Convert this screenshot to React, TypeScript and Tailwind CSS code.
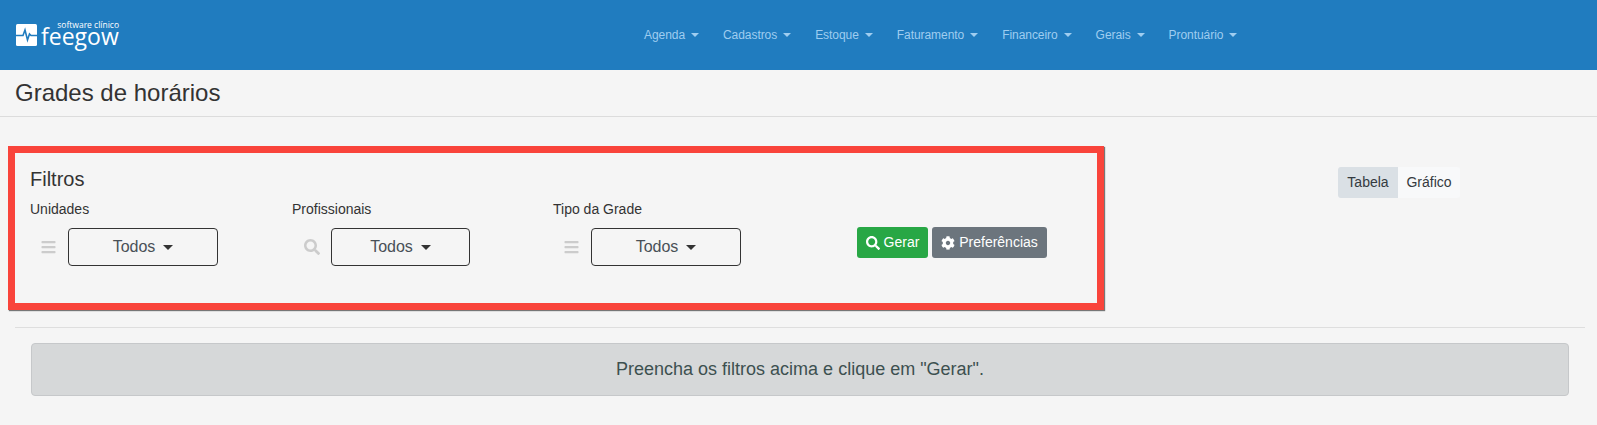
import React from "react";
import { FaBars, FaCog, FaSearch } from "react-icons/fa";

const navItems = ["Agenda", "Cadastros", "Estoque", "Faturamento", "Financeiro", "Gerais", "Prontuário"];

function Caret({ className }: { className: string }) {
    return <span className={`inline-block ${className}`} />;
}

function Logo() {
    return (
        <div className="flex items-start text-white">
            <svg width="21" height="22" viewBox="0 0 21 22" className="mt-[2px]">
                <rect width="21" height="22" rx="1.5" fill="#fff" />
                <path d="M0 11.5 H7 L9 6 L11.5 16 L13.5 10 L15 11.5 H21" fill="none" stroke="#207cbf" strokeWidth="1.6" />
            </svg>
            <div className="relative ml-[4px] h-[30px] w-[78px]">
                <span className="absolute top-0 right-[0px] font-['Open_Sans',sans-serif] text-[8.5px] leading-[6px] whitespace-nowrap">
                    software clínico
                </span>
                <span className="absolute top-[6px] left-0 font-['Open_Sans',sans-serif] text-[23px] leading-[16px]">
                    feegow
                </span>
            </div>
        </div>
    );
}

function FilterSelect({ label, icon, iconClass, selectClass, gapClass, colClass }: { label: string; icon: React.ReactNode; iconClass: string; selectClass: string; gapClass: string; colClass: string }) {
    return (
        <div className={`shrink-0 ${colClass}`}>
            <div className="text-[14px] leading-[21px] text-[#333]">{label}</div>
            <div className={`mt-[8px] flex items-center ${gapClass}`}>
                <span className={`flex justify-center text-[#ccc] ${iconClass}`}>{icon}</span>
                <button className={`flex h-[38px] items-center justify-center gap-[8px] rounded border border-[#333] text-[16px] text-[#495057] ${selectClass}`}>
                    Todos
                    <Caret className="border-x-[5px] border-t-[5px] border-x-transparent border-t-[#333]" />
                </button>
            </div>
        </div>
    );
}

export default function App() {
    return (
        <div className="h-[425px] overflow-hidden bg-[#f5f5f5] font-['Liberation_Sans',sans-serif]">
            <header className="flex h-[70px] bg-[#207cbf]">
                <div className="mt-[22px] ml-[16px] h-[30px]">
                    <Logo />
                </div>
                <nav className="mt-[27px] ml-[525px] flex h-[16px] gap-[24px] text-[12px] leading-[16px] tracking-[-0.06px] text-[#9fcdf0]">
                    {navItems.map((item) => (
                        <span key={item} className="flex items-center gap-[6px]">
                            {item}
                            <Caret className="border-x-[4px] border-t-[4px] border-x-transparent border-t-[#9fcdf0]" />
                        </span>
                    ))}
                </nav>
            </header>

            <div className="h-[47px] border-b border-[#dcdcdc] pl-[15px]">
                <h1 className="text-[24px] leading-[46px] text-[#333]">Grades de horários</h1>
            </div>

            <div className="mt-[29px] flex items-start">
                <section className="ml-[8px] h-[164px] w-[1096px] border-[7px] border-[#f9443b] pt-[14px] pl-[15px] shadow-[1px_1px_1px_#777]">
                    <h2 className="text-[20px] leading-[24px] text-[#333]">Filtros</h2>
                    <div className="mt-[8px] flex">
                        <FilterSelect label="Unidades" icon={<FaBars size={16} />} iconClass="ml-[11px] w-[15px]" gapClass="gap-[12px]" selectClass="w-[150px]" colClass="w-[262px]" />
                        <FilterSelect label="Profissionais" icon={<FaSearch size={16} />} iconClass="ml-[12px] w-[16px]" gapClass="gap-[11px]" selectClass="w-[139px]" colClass="w-[261px]" />
                        <FilterSelect label="Tipo da Grade" icon={<FaBars size={16} />} iconClass="ml-[11px] w-[15px]" gapClass="gap-[12px]" selectClass="w-[150px]" colClass="w-[262px]" />
                        <div className="mt-[28px] ml-[42px] flex h-[31px] gap-[4px] text-[14px] text-white">
                            <button className="flex w-[71px] items-center justify-center gap-[4px] rounded-[3px] bg-[#28a745]">
                                <FaSearch size={14} />
                                Gerar
                            </button>
                            <button className="flex w-[115px] items-center justify-center gap-[4px] rounded-[3px] bg-[#6c757d]">
                                <FaCog size={14} />
                                Preferências
                            </button>
                        </div>
                    </div>
                </section>
                <div className="mt-[21px] ml-[234px] flex h-[31px] text-[14px] leading-[31px] text-[#343a40]">
                    <button className="w-[60px] rounded-l-[3px] bg-[#dae0e5]">Tabela</button>
                    <button className="w-[62px] rounded-r-[3px] bg-[#f8f9fa]">Gráfico</button>
                </div>
            </div>

            <div className="mt-[17px] mr-[12px] ml-[15px] border-t border-[#dedede] pt-[15px] pr-[16px] pl-[16px]">
                <div className="flex h-[53px] items-center justify-center rounded border border-[#c6c8ca] bg-[#d6d8d9] text-[18px] text-[#3d5050]">
                    Preencha os filtros acima e clique em "Gerar".
                </div>
            </div>
        </div>
    );
}
